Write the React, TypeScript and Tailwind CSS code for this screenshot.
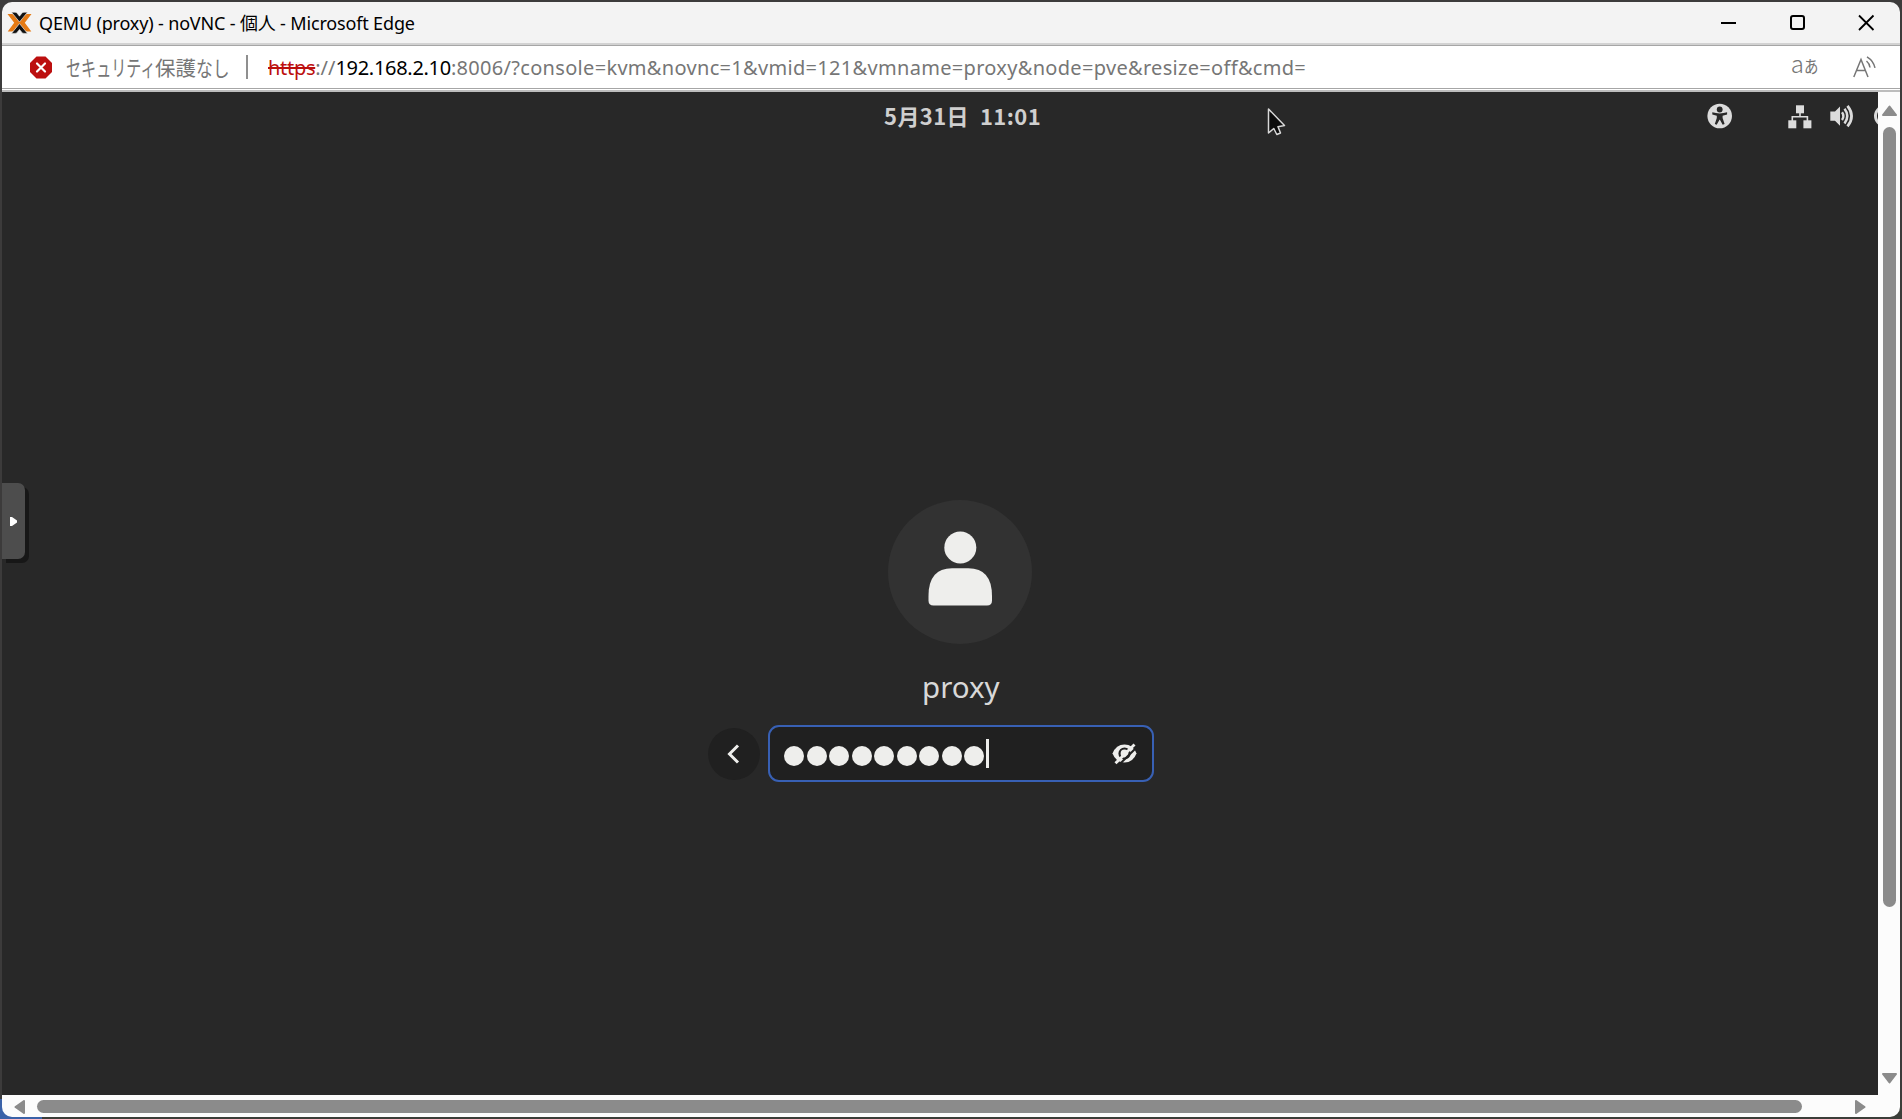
import type { ReactNode } from "react";

const UI = "font-['Noto_Sans','Noto_Sans_CJK_JP',sans-serif]";

function ProxmoxLogo() {
  return (
    <svg className="ml-[5px] h-[24px] w-[25px] shrink-0" viewBox="0 0 25 24">
      <path d="M.500 3h4.100q1.700 0 2.800 1.300L13.200 11.700 7.400 19.200Q6.300 20.600 4.600 20.600H.700L7.200 11.800Z" fill="#e57a14" />
      <path d="M24.500 3h-4.100q-1.700 0-2.800 1.300L11.800 11.700 17.600 19.200Q18.700 20.600 20.400 20.600H24.300L17.800 11.800Z" fill="#e57a14" />
      <path d="M4.500 1.200H8q1.400 0 2.300 1.200L12.500 5.200 14.700 2.400Q15.600 1.200 17 1.200H20.500L12.500 11Z" fill="#111" stroke="#f3f3f3" strokeWidth=".6" />
      <path d="M4.500 22.400H8q1.400 0 2.300-1.200L12.500 18.400 14.700 21.200Q15.600 22.400 17 22.400H20.500L12.500 12.600Z" fill="#111" stroke="#f3f3f3" strokeWidth=".6" />
    </svg>
  );
}

function TitleBar() {
  return (
    <div className="flex h-[41px] shrink-0 items-center bg-[#f3f3f3]">
      <ProxmoxLogo />
      <div className="ml-[7px] w-[390px] whitespace-nowrap text-[18px] leading-[24px] tracking-[-0.16px] text-black">
        QEMU (proxy) - noVNC - 個人 - Microsoft Edge
      </div>
      <svg className="ml-auto mr-[25px] h-[17px] w-[155px]" viewBox="0 0 155 17" fill="none" stroke="#000">
        <path d="M1 9h15" strokeWidth="2" />
        <rect x="71" y="2" width="13" height="13" rx="2" strokeWidth="2" />
        <path d="M139 1.500l14.500 14.500M153.500 1.500l-14.500 14.500" strokeWidth="1.800" />
      </svg>
    </div>
  );
}

function AddressBar() {
  return (
    <div className="flex h-[42px] shrink-0 items-center bg-white text-[20px] text-[#767676]">
      <svg className="ml-[28px] h-[23px] w-[22px] shrink-0" viewBox="0 0 22 23">
        <path d="M6.500 .5h9L22 7v9l-6.500 6.500h-9L0 16V7Z" fill="#bc0f0f" />
        <path d="M7 7.500l8 8M15 7.500l-8 8" stroke="#fff" strokeWidth="2.200" strokeLinecap="round" />
      </svg>
      <div className="ml-[14px] w-[164px] shrink-0 whitespace-nowrap font-['Noto_Sans_CJK_JP',sans-serif] leading-[28px]">
        <span className="inline-block w-[132px] origin-left scale-x-[0.685] text-[22px]">セキュリティ</span>
        <span className="-ml-[43px] text-[20.500px]">保護</span>
        <span className="inline-block origin-left scale-x-[0.8] text-[21px]">なし</span>
      </div>
      <div className="ml-[16px] h-[24px] w-[2px] shrink-0 bg-[#8f8f8f]" />
      <div className="ml-[20px] mt-[2px] whitespace-nowrap leading-[28px]">
        <span className="tracking-[-0.3px] text-[#bc0f0f] line-through decoration-2">https</span>
        <span className="tracking-[0px]">://</span>
        <span className="tracking-[-0.3px] text-black">192.168.2.10</span>
        <span className="tracking-[0.310px]">:8006/?console=kvm&amp;novnc=1&amp;vmid=121&amp;vmname=proxy&amp;node=pve&amp;resize=off&amp;cmd=</span>
      </div>
      <div className="ml-auto flex items-center whitespace-nowrap font-['Noto_Sans_CJK_JP',sans-serif]">
        <span className="-mt-[5px] flex items-baseline">
          <span className="text-[24px] font-light leading-[24px]">a</span>
          <span className="inline-block origin-left scale-x-[0.85] text-[17px] leading-[24px]">あ</span>
        </span>
        <svg className="ml-[32px] mr-[24px] h-[22px] w-[23px]" viewBox="0 0 23 22" fill="none" stroke="#767676" strokeWidth="1.500">
          <path d="M.8 21L8 3.500 15 21M3.500 14.500h9M13.500 5q3 2.500 3.500 6.500M14 .8q6.500 4 8 11" />
        </svg>
      </div>
    </div>
  );
}

function TopPanel() {
  return (
    <div className="relative flex h-[48px] shrink-0 items-center overflow-hidden text-[#dcdcdc]">
      <div className="-mt-[3px] ml-[882px] flex gap-[11px] whitespace-nowrap font-['Noto_Sans_CJK_JP',sans-serif] text-[22px] font-bold leading-[24px] tracking-[0.400px] text-[#cfcfcf]">
        <span>5月31日</span>
        <span>11:01</span>
      </div>
      <svg className="ml-auto h-[26px] w-[173px] shrink-0" viewBox="0 0 173 26" fill="currentColor">
        <circle cx="14.700" cy="13" r="12.300" />
        <g fill="#282828">
          <circle cx="14.700" cy="6.500" r="2.900" />
          <path d="M7.300 9.300Q14.700 11.600 22.100 9.300V11.500L17.600 12.800V15L19.600 21 17.700 21.700 14.900 16.800H14.500L11.700 21.700 9.800 21 11.800 15V12.800L7.300 11.500Z" />
        </g>
        <rect x="91" y="2.300" width="8" height="8" />
        <rect x="83.300" y="17.300" width="8" height="8" />
        <rect x="98.400" y="17.300" width="8" height="8" />
        <path d="M95 9v4.800M87.300 18v-4.200h15.100V18" fill="none" stroke="currentColor" strokeWidth="1.600" />
        <path d="M125.300 8.500h4.700L135 3.500V22.700L130 17.800H125.300Z" />
        <g fill="none" stroke="currentColor">
          <path d="M137 9.200q2.800 3.900 0 7.800" strokeWidth="2.400" />
          <path d="M139.500 5.800q5.600 7.300 0 14.600" strokeWidth="2.500" />
          <path d="M142.500 2.800q8.200 10.300 0 20.600" strokeWidth="2.700" />
        </g>
        <circle cx="180" cy="13" r="9.500" fill="none" stroke="currentColor" strokeWidth="3" />
      </svg>
    </div>
  );
}

function Avatar() {
  return (
    <div className="flex size-[144px] items-center justify-center rounded-full bg-[#323232]">
      <svg className="mb-[6px] h-[76px] w-[64px]" viewBox="0 0 64 76" fill="#eeeeec">
        <circle cx="32.300" cy="16.500" r="16" />
        <path d="M.5 65Q.5 37.200 24 37.200H40.300Q64 37.200 64 65V69.500Q64 74.500 59 74.500H5.500Q.5 74.500 .5 69.500Z" />
      </svg>
    </div>
  );
}

function LoginForm() {
  return (
    <div className="flex h-[57px] items-center">
      <div className="ml-[1px] flex size-[52px] items-center justify-center rounded-full bg-[#202020]">
        <svg className="mr-[2px] h-[20px] w-[14px]" viewBox="0 0 14 20" fill="none" stroke="#eeeeec" strokeWidth="3">
          <path d="M12 1.500L3.500 10l8.500 8.500" />
        </svg>
      </div>
      <div className="ml-[8px] flex h-[57px] w-[386px] items-center rounded-[11px] border-2 border-[#3860b4] bg-[#202020]">
        <div className="ml-[14px] mt-[4px] flex gap-[2.550px]">
          {Array.from({ length: 9 }, (_, i) => (
            <span key={i} className="h-[20px] w-[20px] rounded-full bg-[#eeeeec]" />
          ))}
        </div>
        <div className="ml-[2px] h-[29px] w-[3px] bg-[#eeeeec]" />
        <svg className="ml-auto mr-[15px] h-[22px] w-[25px]" viewBox="0 0 25 22">
          <path d="M.5 10.500Q4 1.500 12.500 1.500T24.500 10.500Q21 19.500 12.500 19.500T.5 10.500Z" fill="#eeeeec" />
          <circle cx="12.500" cy="10.500" r="5" fill="none" stroke="#202020" strokeWidth="2.200" />
          <path d="M6 22.800L25 4" stroke="#202020" strokeWidth="2" />
          <path d="M3.500 20.300L22.500 1.500" stroke="#eeeeec" strokeWidth="2.800" />
        </svg>
      </div>
    </div>
  );
}

function Screen() {
  return (
    <div className="relative flex min-w-0 flex-1 flex-col overflow-hidden bg-[#282828]">
      <TopPanel />
      <div className="flex flex-1 flex-col items-start pt-[360px]">
        <div className="ml-[705px] flex w-[447px] flex-col">
          <div className="ml-[181px]">
            <Avatar />
          </div>
          <div className="mb-[19px] mt-[23px] ml-[215px] h-[39px] whitespace-nowrap text-[29.500px] leading-[39px] text-[#d8d8d8]">proxy</div>
          <LoginForm />
        </div>
      </div>
      <div className="absolute left-0 top-[391px] flex h-[76px] w-[23px] items-center rounded-r-[7px] bg-[#4d4d4d] shadow-[4px_4px_0_#171717]">
        <svg className="ml-[8px] h-[9px] w-[7px]" viewBox="0 0 7 9">
          <path d="M0 0H2L7 3.500V5.500L2 9H0Z" fill="#fff" />
        </svg>
      </div>
      <svg className="absolute left-[1265px] top-[15px] h-[30px] w-[20px]" viewBox="0 0 20 30">
        <path d="M1.500 2V26L6.800 21.500 9.800 27.500 13.500 26 11 19.800 17.500 18.500Z" fill="#0c0c0c" stroke="#d8d8d8" strokeWidth="1.500" strokeLinejoin="round" />
      </svg>
    </div>
  );
}

function Arrow({ className, d, box }: { className: string; d: string; box: string }): ReactNode {
  return (
    <svg className={className} viewBox={box}>
      <path d={d} fill="#8b8b8b" stroke="#8b8b8b" strokeWidth="2" strokeLinejoin="round" />
    </svg>
  );
}

function VerticalScrollbar() {
  return (
    <div className="flex w-[22px] shrink-0 flex-col items-start bg-[#fcfcfc] pl-[4px] pt-[13px]">
      <Arrow className="h-[11px] w-[15px] shrink-0" box="0 0 15 11" d="M7.500 1.500L14 10H1Z" />
      <div className="ml-[1px] mt-[11px] h-[780px] w-[13px] shrink-0 rounded-full bg-[#8b8b8b]" />
      <Arrow className="mb-[11px] mt-auto h-[11px] w-[15px] shrink-0" box="0 0 15 11" d="M7.500 9.500L14 1H1Z" />
    </div>
  );
}

function HorizontalScrollbar() {
  return (
    <div className="flex h-[22px] shrink-0 items-center bg-[#fcfcfc] pl-[12px]">
      <Arrow className="mt-[1px] h-[14px] w-[11px] shrink-0" box="0 0 11 14" d="M1.500 7L10 1V13Z" />
      <div className="ml-[12px] mt-[1px] h-[13px] w-[1765px] shrink-0 rounded-full bg-[#8b8b8b]" />
      <Arrow className="ml-[53px] mt-[1px] h-[14px] w-[11px] shrink-0" box="0 0 11 14" d="M9.500 7L1 1V13Z" />
    </div>
  );
}

export default function App() {
  return (
    <div className={`flex h-[1119px] w-[1902px] flex-col overflow-hidden bg-[#3c3b3b] bg-[linear-gradient(90deg,#3a62a8_42px,#3b3e39_42px)] bg-[length:100%_20px] bg-bottom bg-no-repeat pt-[2px] pl-[2px] pr-[2px] pb-[2px] ${UI}`}>
      <div className="flex flex-1 flex-col overflow-hidden rounded-[10px]">
        <TitleBar />
        <div className="h-[3px] shrink-0 border-b border-[#a6a6a6] bg-[#d2d2d2]" />
        <AddressBar />
        <div className="h-[4px] shrink-0 border-b-2 border-t border-b-[#bdbdbd] border-t-[#a6a6a6] bg-white" />
        <div className="flex min-h-0 flex-1">
          <Screen />
          <VerticalScrollbar />
        </div>
        <HorizontalScrollbar />
      </div>
    </div>
  );
}
